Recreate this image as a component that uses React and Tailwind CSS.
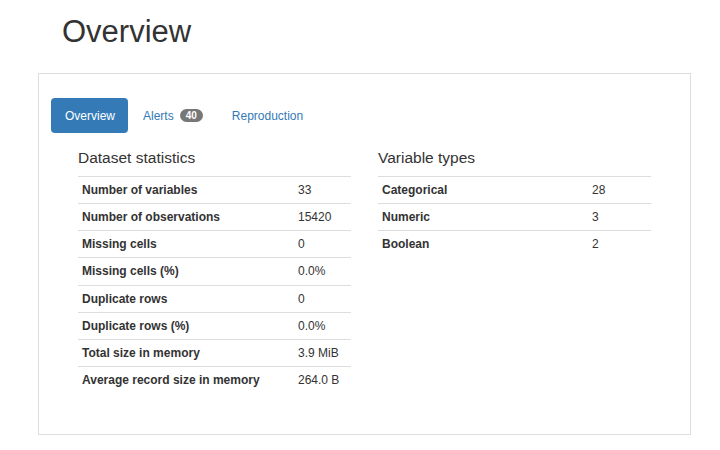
const datasetStats = [
  ["Number of variables", "33"],
  ["Number of observations", "15420"],
  ["Missing cells", "0"],
  ["Missing cells (%)", "0.0%"],
  ["Duplicate rows", "0"],
  ["Duplicate rows (%)", "0.0%"],
  ["Total size in memory", "3.9 MiB"],
  ["Average record size in memory", "264.0 B"],
];

const variableTypes = [
  ["Categorical", "28"],
  ["Numeric", "3"],
  ["Boolean", "2"],
];

function StatTable({ title, rows, labelWidth }) {
  return (
    <div>
      <h4 className="text-[15.5px] leading-[17px] text-[#333] font-normal">{title}</h4>
      <div className="mt-[10px]">
        {rows.map(([label, value]) => (
          <div
            key={label}
            className="flex items-center h-[27.14px] border-t border-[#ddd] text-[12px] text-[#333]"
          >
            <div className={`${labelWidth} pl-[4px] font-bold`}>{label}</div>
            <div className="pl-[5px]">{value}</div>
          </div>
        ))}
      </div>
    </div>
  );
}

export default function App() {
  return (
    <div
      className="w-[720px] h-[450px] bg-white overflow-hidden"
      style={{ fontFamily: '"Liberation Sans", Arial, sans-serif' }}
    >
      <h1 className="pt-[15px] pl-[62px] text-[31px] leading-[34px] text-[#333] font-normal">
        Overview
      </h1>

      <section className="mt-[24px] ml-[38px] w-[653px] h-[362px] border border-[#ddd]">
        <nav className="flex items-center pt-[24px] pl-[12px] text-[12px]">
          <a className="h-[35px] flex items-center pl-[14px] pr-[13px] rounded-[4px] bg-[#337ab7] text-white">
            Overview
          </a>
          <a className="h-[35px] flex items-center pl-[15px] pr-[14px] text-[#337ab7]">
            Alerts
            <span className="ml-[6px] h-[13px] flex items-center px-[6px] rounded-full bg-[#777] text-white text-[10px] font-bold">
              40
            </span>
          </a>
          <a className="h-[35px] flex items-center px-[15px] text-[#337ab7]">
            Reproduction
          </a>
        </nav>

        <div className="grid grid-cols-[273px_273px] gap-[27px] mt-[16px] ml-[39px]">
          <StatTable title="Dataset statistics" rows={datasetStats} labelWidth="w-[215px]" />
          <StatTable title="Variable types" rows={variableTypes} labelWidth="w-[209px]" />
        </div>
      </section>
    </div>
  );
}
